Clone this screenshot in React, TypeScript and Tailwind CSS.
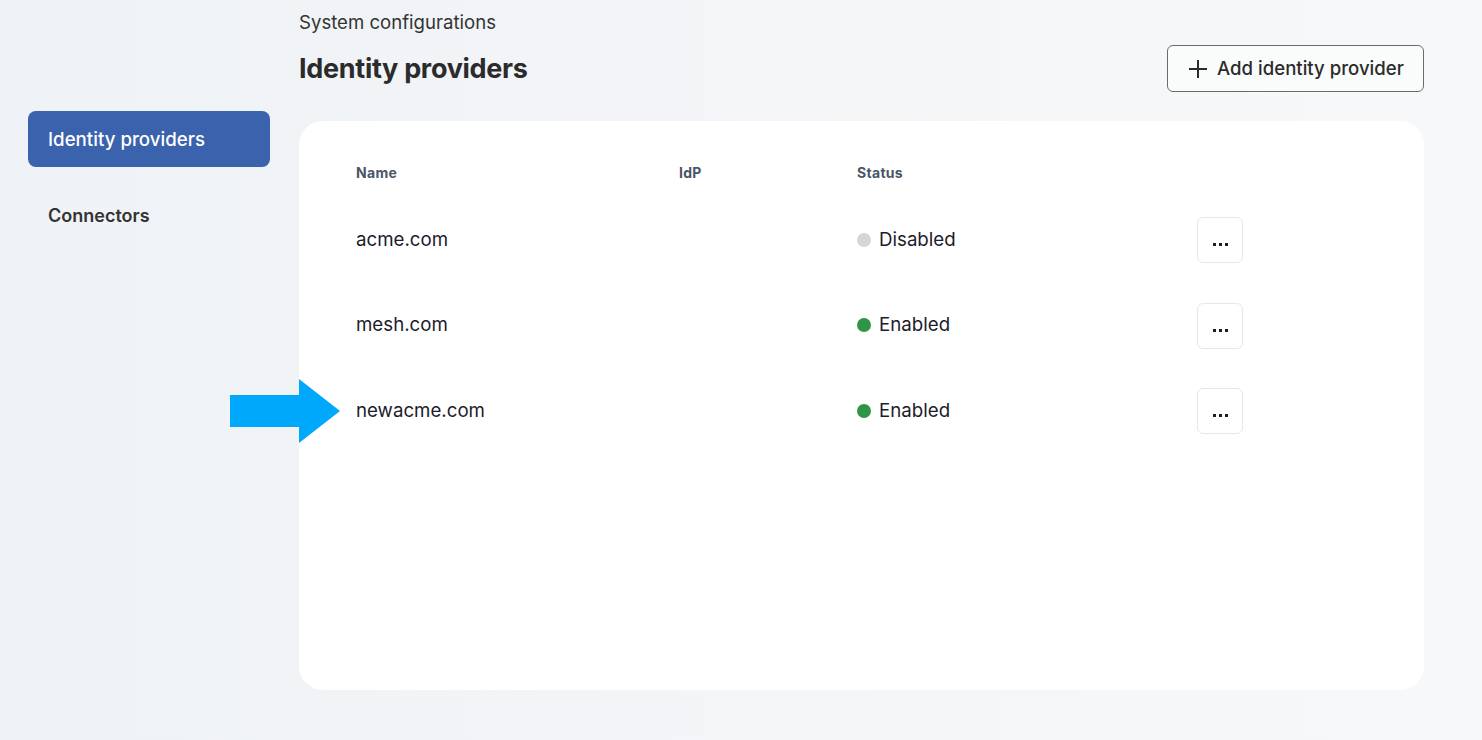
const providers = [
	{ name: "acme.com", enabled: false },
	{ name: "mesh.com", enabled: true },
	{ name: "newacme.com", enabled: true },
]

export default function App() {
	return (
		<div className="relative w-[1482px] h-[740px] overflow-hidden bg-gradient-to-r from-[#eff2f6] to-[#f7f8f9] font-['Inter',sans-serif] text-[#2b2b2b] flex">
			<aside className="w-[299px] shrink-0 pl-[28px] pr-[29px] pt-[111px]">
				<div className="h-[56px] rounded-lg bg-[#3a62ad] text-white text-[18.7px] font-medium flex items-center pl-[20px] pt-[2px]">Identity providers</div>
				<div className="mt-[28px] h-[40px] pl-[20px] flex items-center text-[18px] font-semibold text-[#333]">Connectors</div>
			</aside>

			<main className="flex-1 pr-[58px] pt-[10px]">
				<p className="text-[18.6px] leading-[24px] text-[#333]">System configurations</p>
				<div className="mt-[13px] flex items-center justify-between">
					<h1 className="text-[27px] font-bold text-[#2b2b2b] tracking-[-0.3px]">Identity providers</h1>
					<button className="h-[47px] w-[257px] mt-[-2px] border border-[#6b6b6b] rounded-md bg-[#fafbfb] flex items-center justify-center gap-[8px] text-[18.6px] font-medium text-[#2b2b2b]">
						<svg width="22" height="22" viewBox="0 0 22 22" fill="none" stroke="#2b2b2b" strokeWidth="2">
							<path d="M11 2v18M2 11h18" />
						</svg>
						Add identity provider
					</button>
				</div>

				<div className="mt-[29px] h-[569px] bg-white rounded-[24px] pl-[57px] pt-[41px]">
					<div className="grid grid-cols-[323px_178px_340px_46px] text-[14px] font-bold text-[#4a5568] tracking-[0.3px]">
						<span>Name</span>
						<span>IdP</span>
						<span>Status</span>
						<span />
					</div>
					<div className="mt-[34px] flex flex-col gap-[39.5px]">
						{providers.map((p) => (
							<div key={p.name} className="grid grid-cols-[323px_178px_340px_46px] items-center h-[46px] text-[18.7px] text-[#1c1c2b]">
								<span>{p.name}</span>
								<span />
								<span className="flex items-center gap-[8px]">
									<span className={`size-[14px] rounded-full ${p.enabled ? "bg-[#2f9444]" : "bg-[#d6d6d6]"}`} />
									{p.enabled ? "Enabled" : "Disabled"}
								</span>
								<button className="size-[46px] rounded-md border border-[#e4e8ee] flex items-center justify-center gap-[3px] pt-[9px]">
									<span className="size-[3px] bg-[#1c1c2b]" />
									<span className="size-[3px] bg-[#1c1c2b]" />
									<span className="size-[3px] bg-[#1c1c2b]" />
								</button>
							</div>
						))}
					</div>
				</div>
			</main>

			<svg className="absolute left-[230px] top-[379px]" width="111" height="64" viewBox="0 0 111 64">
				<path d="M0 16H69V0L110 32L69 64V48H0Z" fill="#00a8fb" />
			</svg>
		</div>
	)
}
